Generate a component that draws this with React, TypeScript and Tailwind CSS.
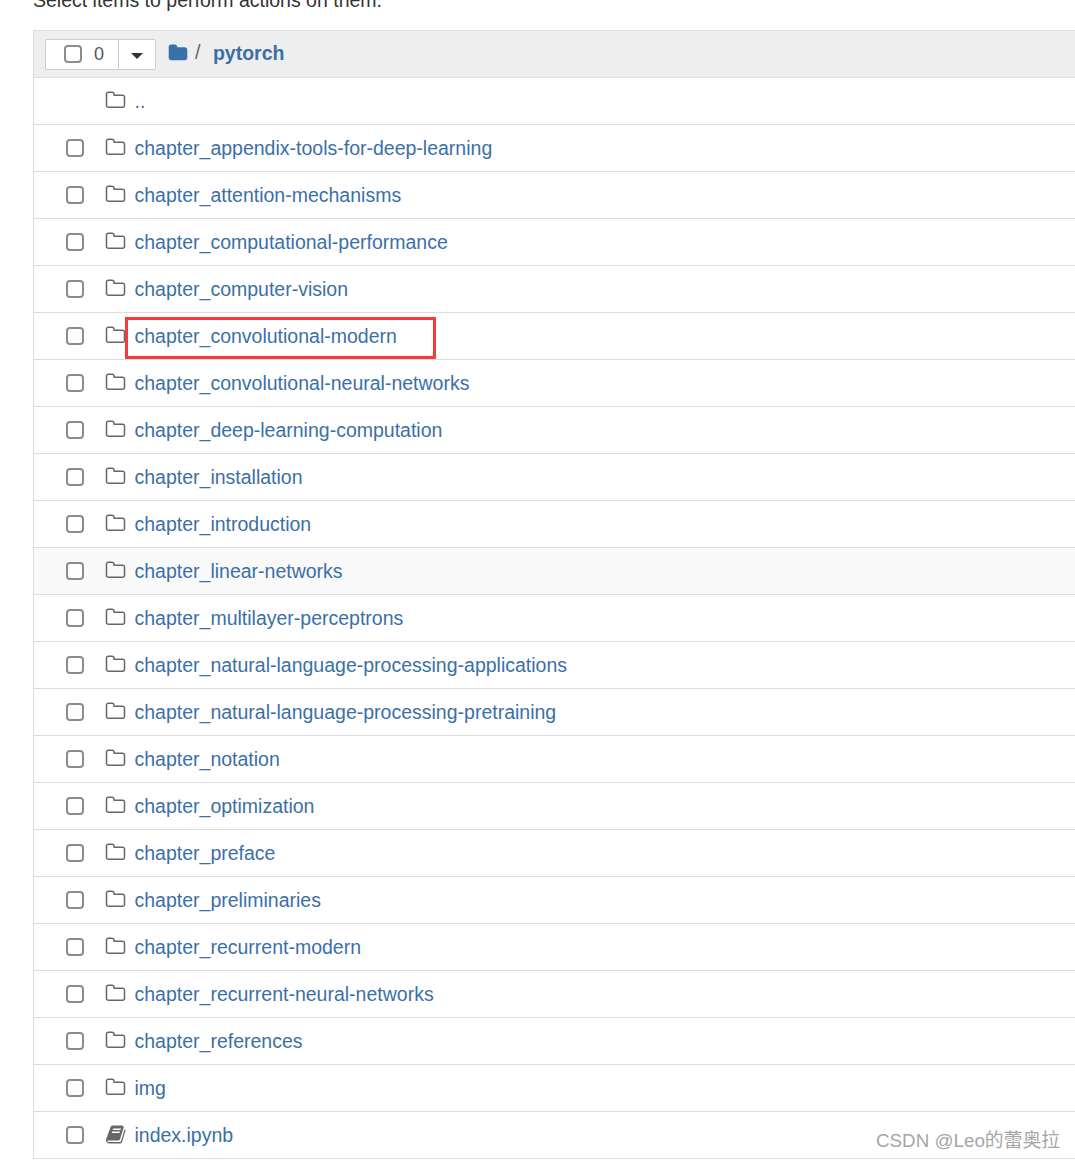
const rows = [
  'chapter_appendix-tools-for-deep-learning',
  'chapter_attention-mechanisms',
  'chapter_computational-performance',
  'chapter_computer-vision',
  'chapter_convolutional-modern',
  'chapter_convolutional-neural-networks',
  'chapter_deep-learning-computation',
  'chapter_installation',
  'chapter_introduction',
  'chapter_linear-networks',
  'chapter_multilayer-perceptrons',
  'chapter_natural-language-processing-applications',
  'chapter_natural-language-processing-pretraining',
  'chapter_notation',
  'chapter_optimization',
  'chapter_preface',
  'chapter_preliminaries',
  'chapter_recurrent-modern',
  'chapter_recurrent-neural-networks',
  'chapter_references',
  'img',
];

const Checkbox = () => (
  <span className="block h-[18px] w-[18px] rounded-[4px] border-2 border-[#8c8c8c] bg-white" />
);

// the packaged folder and book icons are a newer, squatter drawing, so these are inline
const FolderOutline = () => (
  <svg viewBox="0 0 1792 1792" width="21" height="21" fill="currentColor" className="-ml-[1px]">
    <path d="M1600 1312v-704q0-40-28-68t-68-28h-704q-40 0-68-28t-28-68v-64q0-40-28-68t-68-28h-320q-40 0-68 28t-28 68v960q0 40 28 68t68 28h1216q40 0 68-28t28-68zm128-704v704q0 92-66 158t-158 66h-1216q-92 0-158-66t-66-158v-960q0-92 66-158t158-66h320q92 0 158 66t66 158v32h672q92 0 158 66t66 158z" />
  </svg>
);

const FolderSolid = () => (
  <svg viewBox="0 0 1792 1792" width="20" height="20" fill="currentColor">
    <path d="M1728 608v704q0 92-66 158t-158 66h-1216q-92 0-158-66t-66-158v-960q0-92 66-158t158-66h320q92 0 158 66t66 158v32h672q92 0 158 66t66 158z" />
  </svg>
);

const BookIcon = () => (
  <svg viewBox="0 0 1792 1792" width="21" height="21" fill="currentColor">
    <path d="M1639 478q40 57 18 129l-275 906q-19 64-76.5 107.5t-122.5 43.5h-923q-77 0-148.5-53.5t-99.5-131.5q-24-67-2-127 0-4 3-27t4-37q1-8-3-21.5t-3-19.5q2-11 8-21t16.5-23.5 16.5-23.5q23-38 45-91.5t30-91.5q3-10 .5-30t-.5-28q3-11 17-28t17-23q21-36 42-92t25-90q1-9-2.5-32t.5-28q4-13 22-30.5t22-22.5q19-26 42.5-84.5t27.5-96.5q1-8-3-25.5t-2-26.5q2-8 9-18t18-23 17-21q8-12 16.5-30.5t15-35 16-36 19.5-32 26.5-23.5 36-11.5 47.5 5.5l-1 3q38-9 51-9h761q74 0 114 56t18 130l-274 906q-36 119-71.5 153.5t-128.5 34.5h-869q-27 0-38 15-11 16-1 43 24 70 144 70h923q29 0 56-15.5t35-41.5l300-987q7-22 5-57 38 15 59 43zm-1064 2q-4 13 2 22.5t20 9.5h608q13 0 25.5-9.5t16.5-22.5l21-64q4-13-2-22.5t-20-9.5h-608q-13 0-25.5 9.5t-16.5 22.5zm-83 256q-4 13 2 22.5t20 9.5h608q13 0 25.5-9.5t16.5-22.5l21-64q4-13-2-22.5t-20-9.5h-608q-13 0-25.5 9.5t-16.5 22.5z" />
  </svg>
);

const Row = ({ name, book, hover }: { name: string; book?: boolean; hover?: boolean }) => (
  <div className={`flex h-[47px] items-center border-b border-[#dddddd] ${hover ? 'bg-[#f9f9f9]' : 'bg-white'}`}>
    <div className="ml-[32px] w-[40px]">
      <Checkbox />
    </div>
    <span className="flex w-[28.5px] -translate-y-[1px] text-[#666666]">
      {book ? <BookIcon /> : <FolderOutline />}
    </span>
    <a className="text-[19.5px] leading-[28px] text-[#3b6fa8]">{name}</a>
  </div>
);

export default function App() {
  return (
    <div className="relative h-[1160px] w-[1075px] overflow-hidden bg-white font-['Liberation_Sans',Arial,sans-serif]">
      <p className="-mt-[14px] ml-[33px] h-[44px] text-[19.5px] leading-[28px] text-[#333333]">
        Select items to perform actions on them.
      </p>

      <div className="ml-[33px] border-l border-[#dddddd]">
        {/* toolbar */}
        <div className="flex h-[48px] items-center border-y border-[#dddddd] bg-[#eeeeee] pl-[11px]">
          <div className="mt-[1px] flex h-[31px] rounded-[2px] border border-[#cccccc] bg-white">
            <div className="flex w-[73px] items-center border-r border-[#cccccc] pl-[18px]">
              <span className="mb-[2px]">
                <Checkbox />
              </span>
              <span className="ml-[12px] text-[18px] text-[#555555]">0</span>
            </div>
            <div className="flex w-[36px] items-center justify-center">
              <span className="mt-[2px] h-0 w-0 border-x-[6px] border-t-[6px] border-x-transparent border-t-[#333333]" />
            </div>
          </div>
          <span className="ml-[12px] -translate-y-[1px] text-[#3b6fa8]">
            <FolderSolid />
          </span>
          <span className="ml-[7px] -translate-y-[1px] text-[19.5px] text-[#666666]">/</span>
          <a className="ml-[12.5px] text-[19.5px] font-bold text-[#3b6fa8]">pytorch</a>
        </div>

        {/* parent folder */}
        <div className="flex h-[47px] items-center border-b border-[#dddddd]">
          <span className="ml-[72px] flex w-[28.5px] -translate-y-[1px] text-[#666666]">
            <FolderOutline />
          </span>
          <a className="text-[19.5px] leading-[28px] text-[#3b6fa8]">..</a>
        </div>

        {rows.map((name) => (
          <Row key={name} name={name} hover={name === 'chapter_linear-networks'} />
        ))}
        <Row name="index.ipynb" book />
      </div>

      {/* red annotation */}
      <div className="absolute left-[125px] top-[317px] h-[42px] w-[311px] border-[3px] border-[#f93a3a]" />

      {/* watermark */}
      <span className="absolute right-[15px] top-[1129px] text-[18.8px] leading-[24px] text-[#a6a6a6] font-['Liberation_Sans','Noto_Sans_CJK_SC',sans-serif]">
        CSDN @Leo的蕾奥拉
      </span>
    </div>
  );
}
